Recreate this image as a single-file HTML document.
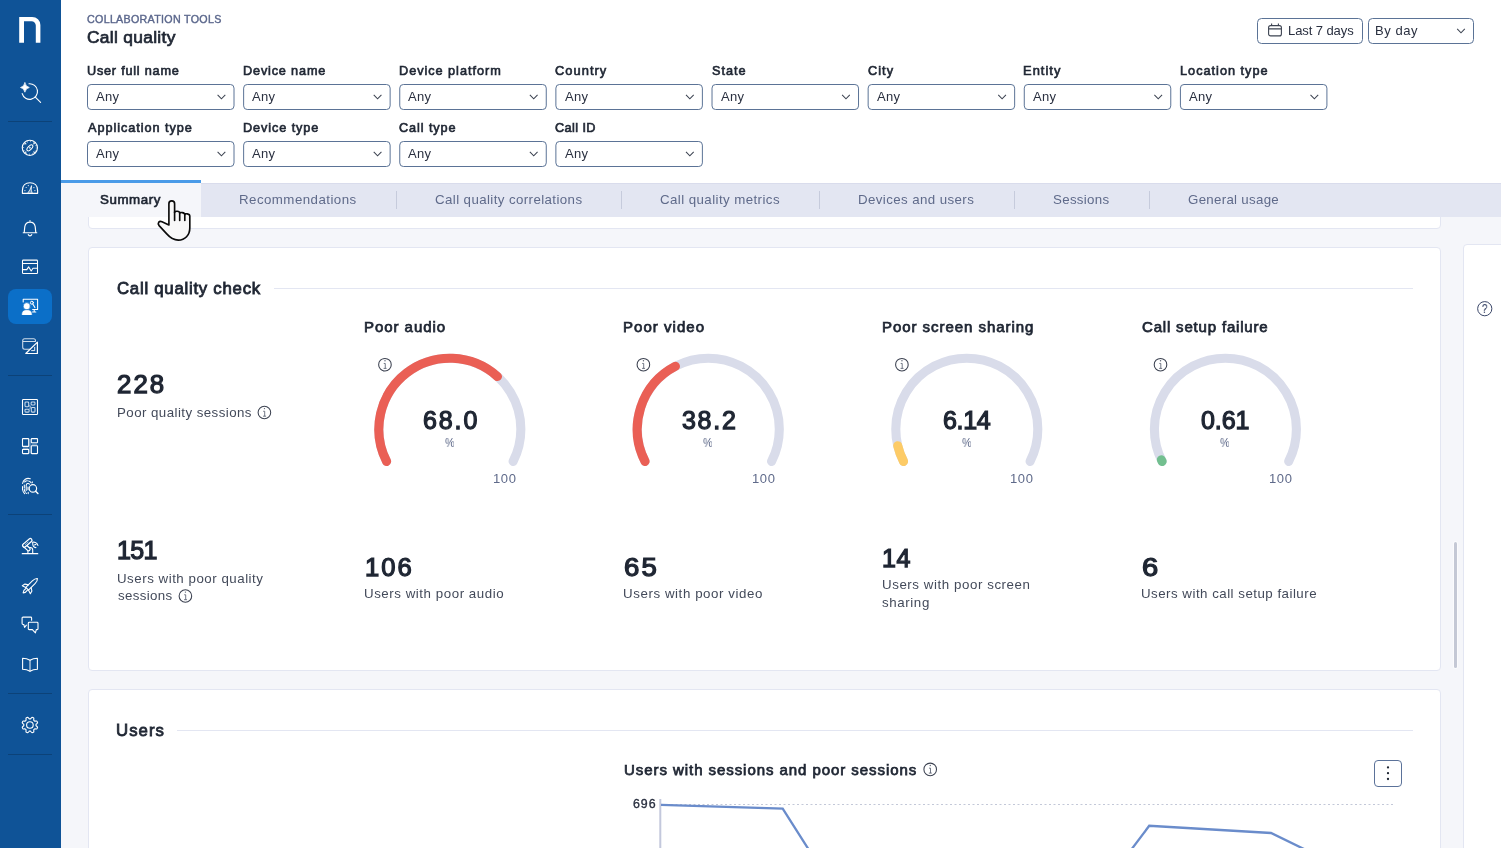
<!DOCTYPE html>
<html lang="en">
<head>
<meta charset="utf-8">
<title>Call quality</title>
<style>
*{box-sizing:border-box;margin:0;padding:0}
html,body{width:1501px;height:848px;overflow:hidden;background:#f5f6fa;font-family:"Liberation Sans",sans-serif;color:#1f2633}
.abs{position:absolute}
#side{position:absolute;left:0;top:0;width:61px;height:848px;background:#0f5397}
#side .sep{position:absolute;left:8px;width:44px;height:1px;background:#0c4278}
#side .act{position:absolute;left:8px;top:289px;width:44px;height:35px;border-radius:8px;background:#0b6fc8}
#side svg{position:absolute;overflow:visible}
#head{position:absolute;left:61px;top:0;width:1440px;height:183px;background:#fff}
.t{position:absolute;white-space:nowrap;line-height:1;will-change:transform}
.crumb{left:87px;top:13px;font-size:11.5px;color:#5a6587;letter-spacing:.35px}
.title{left:87px;top:28px;font-size:17.5px;font-weight:700;color:#1f2633}
.flab{font-size:13px;font-weight:700;color:#1f2633}
.sel{position:absolute;width:147px;height:26px;border:1px solid #5b7396;border-radius:4.5px;background:#fff}
.sel svg{position:absolute}
.sel svg.chev{right:7.2px;top:8.9px}
#tabs{position:absolute;left:61px;top:183px;width:1440px;height:34px;background:#e3e6f2;border-top:1px solid #d9dcec}
#tabs .on{position:absolute;left:0;top:-4px;width:140px;height:37px;background:#f5f6fa;border-top:3px solid #4a9be8}
.tab{position:absolute;top:192px;font-size:13px;color:#5f6a8a;white-space:nowrap;line-height:15px}
.tsep{position:absolute;top:191px;width:1px;height:18px;background:#c6cbdc}
.card{position:absolute;background:#fff;border:1px solid #e3e6f2;border-radius:4px}
.hl{position:absolute;height:1px;background:#e3e6f2}
.h2{font-size:17px;font-weight:700;color:#1f2633}
.big{font-size:26px;font-weight:700;color:#1f2633}
.lab{font-size:13px;color:#434a5a;line-height:17.5px;position:absolute;white-space:nowrap}
.gt{font-size:15px;font-weight:700;color:#1f2633}
.mut{color:#5f6a8a}
</style>
</head>
<body>
<div id="head"></div>

<div id="side">
<div class="act"></div>
<div class="sep" style="top:121px"></div>
<div class="sep" style="top:375px"></div>
<div class="sep" style="top:514px"></div>
<div class="sep" style="top:693px"></div>
<div class="sep" style="top:754px"></div>
<svg width="61" height="848" viewBox="0 0 61 848" fill="none" stroke="#fff" stroke-width="1.15" stroke-linecap="round" stroke-linejoin="round" style="left:0;top:0">
<path d="M19.2 42.8V16.9H32.2A8.2 8.2 0 0 1 40.4 25.1V42.8H35.8V25.6A4.3 4.3 0 0 0 31.5 21.3H24V42.8Z" fill="#fff" stroke="none"/>
<path d="M29 83.75A7.8 7.8 0 1 1 22.2 93.6M35.3 97.2L40.6 102.3" stroke-width="1.15"/>
<path d="M24.9 82.8Q25.7 86.7 29.3 87.5Q25.7 88.3 24.9 92.2Q24.1 88.3 20.5 87.5Q24.1 86.7 24.9 82.8Z" fill="#fff" stroke-width="0.7"/>
<circle cx="29.85" cy="147.85" r="7.6" stroke-width="1.1"/>
<circle cx="29.85" cy="147.85" r="6.5" stroke-width="1.5" stroke-dasharray="0.7 2.703" stroke-dashoffset=".35" stroke-linecap="butt" opacity=".7"/>
<path d="M24.9 142.9L25.9 143.9M34.8 142.9L33.8 143.9M24.9 152.8L25.9 151.8M34.8 152.8L33.8 151.8" stroke-width="1.2" opacity=".9"/>
<ellipse cx="29.85" cy="147.85" rx="3.7" ry="1.9" transform="rotate(-45 29.85 147.85)" stroke-width="1.05"/>
<circle cx="29.85" cy="147.85" r="1" fill="#fff" stroke="none" opacity=".75"/>
<path d="M22.4 193.3V190.4C22.4 185.6 25.6 182.7 30 182.7C34.4 182.7 37.6 185.6 37.6 190.4V193.3Z" stroke-width="1.15"/>
<path d="M27.8 193L29.9 189.8L31.6 185.6L31.2 190L32.2 193" stroke-width="0.8" fill="#fff" fill-opacity=".35"/>
<circle cx="24.9" cy="190.6" r=".62" fill="#fff" stroke="none" opacity=".9"/>
<circle cx="26.2" cy="187.5" r=".62" fill="#fff" stroke="none" opacity=".9"/>
<circle cx="28.3" cy="185.6" r=".62" fill="#fff" stroke="none" opacity=".9"/>
<circle cx="33.9" cy="187.6" r=".62" fill="#fff" stroke="none" opacity=".9"/>
<circle cx="34.9" cy="190.6" r=".62" fill="#fff" stroke="none" opacity=".9"/>
<path d="M24.2 232.6L24.8 226.6A5.3 5.5 0 0 1 35.2 226.6L35.8 232.6M23.2 232.7H36.8M28.3 234.6A1.8 1.8 0 0 0 31.7 234.6M30 220.6V221.2" stroke-width="1.15"/>
<rect x="22.5" y="260.1" width="15" height="13.4" rx=".8" stroke-width="1.05"/>
<path d="M22.5 263.4H37.5M22.5 269.6H26.8L28.6 266.9L31.2 271L33 268.2H37.5" stroke-width="1.05"/>
<path d="M23.2 302V299.2H37.6V309.4H32.6M34.2 309.6V311.9M32.4 312H35.8" stroke-width="1.05"/>
<circle cx="31.9" cy="302.7" r="1.5" stroke-width="1.0"/><path d="M32.8 304L34.9 307.5" stroke-width="1.1"/>
<circle cx="26.8" cy="306.2" r="3.6" fill="#fff" stroke="#0b6fc8" stroke-width="0.7"/>
<path d="M21.6 315.1C21.6 311 23.6 309.7 26.9 309.7C30.2 309.7 32.2 311 32.2 315.1Z" fill="#fff" stroke="#0b6fc8" stroke-width="0.6"/>
<path d="M30 349.2H24.7A2 2 0 0 1 22.7 347.2V340.7A2 2 0 0 1 24.7 338.7H33.5A2 2 0 0 1 35.5 340.7V341.3M22.7 341.5H35.3" stroke-width="1.05" opacity=".8"/>
<path d="M37.4 342.1V353.5H25.8Z" stroke-width="1.2"/>
<path d="M34.7 347.3V350.6H31.6" stroke-width="1.0" opacity=".9"/>
<rect x="22.5" y="399.5" width="15" height="15" rx=".8" stroke-width="1.1"/>
<g stroke-width="1.05" opacity=".78"><rect x="25" y="402" width="3.7" height="4.7" rx=".9"/><rect x="31.1" y="402" width="3.9" height="2.9" rx=".9"/><rect x="25" y="409.2" width="4.1" height="2.9" rx=".9"/><rect x="31.3" y="407.4" width="3.7" height="4.7" rx=".9"/><path d="M29.3 405.6L30.8 407.8M29.8 408.8L30.6 406" opacity=".6"/></g>
<g stroke-width="1.1"><rect x="22.5" y="438.6" width="6.2" height="7.8" rx=".5"/><rect x="31.3" y="438.6" width="6.2" height="4.2" rx=".5"/><rect x="22.5" y="449.4" width="6.2" height="4.2" rx=".5"/><rect x="31.3" y="445.7" width="6.2" height="7.9" rx=".5"/></g>
<path d="M30 439V453.4M23 447.9H28.3M31.8 444.3H37" stroke-width="1.5" opacity=".3" stroke-linecap="butt"/>
<g stroke-width="1.05"><path d="M22.6 483.5A5.6 5.6 0 0 1 30.3 478.8M22.5 486.5V489.5A8 8 0 0 0 24.6 493.6" /><path d="M24.6 482A4.2 4.2 0 0 1 31.3 483.2M24.3 485V489.2A6 6 0 0 0 26.5 493.4" stroke-dasharray="3 1.2"/><path d="M26.2 490.5V485.3A1.9 1.9 0 0 1 29.6 484.2M28 487V489.8M28.2 492.3V493.6M32.3 481.8V482.8" /></g>
<circle cx="32.9" cy="488.4" r="3.7" stroke-width="1.15"/><path d="M35.6 491.2L37.9 493.5" stroke-width="1.5"/>
<path d="M22.3 553.7H37.7" stroke-width="1.25"/>
<path d="M27.9 553.4V549.9A2.4 2.4 0 0 1 32.7 549.9V553.4" stroke-width="1.1"/>
<path d="M24.3 545.4L28.6 549.2" stroke-width="4.3"/><path d="M24.3 545.4L28.6 549.2" stroke-width="1.9" stroke="#0f5397"/>
<path d="M24.3 545.4L30.3 540.2" stroke-width="4.6"/><path d="M24.3 545.4L30.3 540.2" stroke-width="2.1" stroke="#0f5397"/>
<path d="M25.3 544.5L28 542.2" stroke-width="0.8" stroke-dasharray="1.4 1" opacity=".8"/>
<path d="M32.3 542.3C34.6 541.6 37.4 542.8 37.9 545.5M32.7 543.4C32.7 545.6 33.9 547.2 35.9 547.6M34.5 544.9L36 544.3" stroke-width="1.1"/>
<g transform="translate(30 586) rotate(-45)" stroke-width="1.1"><path d="M-4 -1.9H5.2C7.8 -1.9 9.7 -1 10.5 0C9.7 1 7.8 1.9 5.2 1.9H-4Z"/><path d="M-0.3 -1.9L-2.2 -4.9L-5.2 -5.7L-4 -2M-0.3 1.9L-2.2 4.9L-5.2 5.7L-4 2M-4.7 -1.1C-7 -1.6 -8.8 -.9 -9.7 0C-8.8 .9 -7 1.6 -4.7 1.1"/></g>
<g stroke-width="1.1"><path d="M31.6 620.2V618A.9.9 0 0 0 30.7 617.1H23A.9.9 0 0 0 22.1 618V623.6A.9.9 0 0 0 23 624.5H23.8L24.6 627.4L26.4 625.2"/><path d="M29.2 622.3H37.1A.9.9 0 0 1 38 623.2V628.7A.9.9 0 0 1 37.1 629.6H36.3L35.4 632.9L32.4 629.6H29.2A.9.9 0 0 1 28.3 628.7V623.2A.9.9 0 0 1 29.2 622.3Z"/></g>
<path d="M22.6 658.3C25.5 658.3 28 659 30 660.3C32 659 34.5 658.3 37.4 658.3V669.3C34.5 669.3 32 670 30 671.3C28 670 25.5 669.3 22.6 669.3Z" stroke-width="1.1"/>
<path d="M30 660.5V671" stroke-width="1.5" opacity=".65"/>
<path d="M36.00 725.00L36.00 725.16L35.99 725.32L35.98 725.48L35.97 725.64L36.14 725.82L36.40 726.03L36.68 726.26L36.95 726.50L37.21 726.76L37.44 727.02L37.57 727.27L37.51 727.47L37.44 727.67L37.37 727.87L37.29 728.06L37.21 728.25L37.12 728.44L37.03 728.63L36.93 728.82L36.66 728.90L36.31 728.93L35.95 728.93L35.58 728.90L35.22 728.87L34.89 728.83L34.64 728.84L34.54 728.96L34.43 729.08L34.32 729.20L34.21 729.31L34.10 729.42L33.98 729.53L33.86 729.64L33.74 729.74L33.73 729.99L33.77 730.32L33.80 730.68L33.83 731.05L33.83 731.41L33.80 731.76L33.72 732.03L33.53 732.13L33.34 732.22L33.15 732.31L32.96 732.39L32.77 732.47L32.57 732.54L32.37 732.61L32.17 732.67L31.92 732.54L31.66 732.31L31.40 732.05L31.16 731.78L30.93 731.50L30.72 731.24L30.54 731.07L30.38 731.08L30.22 731.09L30.06 731.10L29.90 731.10L29.74 731.10L29.58 731.09L29.42 731.08L29.26 731.07L29.08 731.24L28.87 731.50L28.64 731.78L28.40 732.05L28.14 732.31L27.88 732.54L27.63 732.67L27.43 732.61L27.23 732.54L27.03 732.47L26.84 732.39L26.65 732.31L26.46 732.22L26.27 732.13L26.08 732.03L25.99 731.76L25.97 731.41L25.97 731.05L26.00 730.68L26.03 730.32L26.07 729.99L26.06 729.74L25.94 729.64L25.82 729.53L25.70 729.42L25.59 729.31L25.48 729.20L25.37 729.08L25.26 728.96L25.16 728.84L24.91 728.83L24.58 728.87L24.22 728.90L23.85 728.93L23.49 728.93L23.14 728.90L22.87 728.82L22.77 728.63L22.68 728.44L22.59 728.25L22.51 728.06L22.43 727.87L22.36 727.67L22.29 727.47L22.23 727.27L22.36 727.02L22.59 726.76L22.85 726.50L23.12 726.26L23.40 726.03L23.66 725.82L23.83 725.64L23.82 725.48L23.81 725.32L23.80 725.16L23.80 725.00L23.80 724.84L23.81 724.68L23.82 724.52L23.83 724.36L23.66 724.18L23.40 723.97L23.12 723.74L22.85 723.50L22.59 723.24L22.36 722.98L22.23 722.73L22.29 722.53L22.36 722.33L22.43 722.13L22.51 721.94L22.59 721.75L22.68 721.56L22.77 721.37L22.87 721.18L23.14 721.10L23.49 721.07L23.85 721.07L24.22 721.10L24.58 721.13L24.91 721.17L25.16 721.16L25.26 721.04L25.37 720.92L25.48 720.80L25.59 720.69L25.70 720.58L25.82 720.47L25.94 720.36L26.06 720.26L26.07 720.01L26.03 719.68L26.00 719.32L25.97 718.95L25.97 718.59L25.99 718.24L26.08 717.97L26.27 717.87L26.46 717.78L26.65 717.69L26.84 717.61L27.03 717.53L27.23 717.46L27.43 717.39L27.63 717.33L27.88 717.46L28.14 717.69L28.40 717.95L28.64 718.22L28.87 718.50L29.08 718.76L29.26 718.93L29.42 718.92L29.58 718.91L29.74 718.90L29.90 718.90L30.06 718.90L30.22 718.91L30.38 718.92L30.54 718.93L30.72 718.76L30.93 718.50L31.16 718.22L31.40 717.95L31.66 717.69L31.92 717.46L32.17 717.33L32.37 717.39L32.57 717.46L32.77 717.53L32.96 717.61L33.15 717.69L33.34 717.78L33.53 717.87L33.72 717.97L33.80 718.24L33.83 718.59L33.83 718.95L33.80 719.32L33.77 719.68L33.73 720.01L33.74 720.26L33.86 720.36L33.98 720.47L34.10 720.58L34.21 720.69L34.32 720.80L34.43 720.92L34.54 721.04L34.64 721.16L34.89 721.17L35.22 721.13L35.58 721.10L35.95 721.07L36.31 721.07L36.66 721.10L36.93 721.18L37.03 721.37L37.12 721.56L37.21 721.75L37.29 721.94L37.37 722.13L37.44 722.33L37.51 722.53L37.57 722.73L37.44 722.98L37.21 723.24L36.95 723.50L36.68 723.74L36.40 723.97L36.14 724.18L35.97 724.36L35.98 724.52L35.99 724.68L36.00 724.84Z" stroke-width="1.1"/>
<circle cx="29.9" cy="725" r="3.3" stroke-width="1.1"/>
</svg>
</div>
<div class="t" style="left:87.27px;top:14px;font-size:10.7px;-webkit-text-stroke:0.40px #5b678c;color:#5b678c;letter-spacing:0.30px;">COLLABORATION TOOLS</div>
<div class="t" style="left:87.20px;top:29px;font-size:17.4px;-webkit-text-stroke:0.74px #1f2633;color:#1f2633;letter-spacing:0.30px;">Call quality</div>
<div class="sel" style="left:1257px;top:18px;width:106px"><svg style="left:9.2px;top:3.4px" width="16" height="16" viewBox="0 0 16 16" fill="none" stroke="#3d4452" stroke-width="1.1"><rect x="1.6" y="3.6" width="12.8" height="10.3" rx="2"/><path d="M1.6 6.9h12.8M4.6 1.4v2.2M11.4 1.4v2.2"/></svg></div>
<div class="t" style="left:1287.86px;top:24px;font-size:13px;color:#2a3040;letter-spacing:-0.08px;">Last 7 days</div>
<div class="sel" style="left:1368px;top:18px;width:106px"><svg class="chev" width="10" height="6" viewBox="0 0 10 6"><path d="M1.2 .9l3.8 3.9 3.8-3.9" fill="none" stroke="#3d4452" stroke-width="1.05"/></svg></div>
<div class="t" style="left:1375.46px;top:24px;font-size:13px;color:#2a3040;letter-spacing:0.56px;">By day</div>
<div class="t" style="left:86.77px;top:65px;font-size:12.7px;-webkit-text-stroke:0.64px #1f2633;color:#1f2633;letter-spacing:0.77px;">User full name</div>
<div class="t" style="left:242.83px;top:65px;font-size:12.7px;-webkit-text-stroke:0.64px #1f2633;color:#1f2633;letter-spacing:0.83px;">Device name</div>
<div class="t" style="left:398.96px;top:65px;font-size:12.7px;-webkit-text-stroke:0.64px #1f2633;color:#1f2633;letter-spacing:0.97px;">Device platform</div>
<div class="t" style="left:555.47px;top:65px;font-size:12.7px;-webkit-text-stroke:0.64px #1f2633;color:#1f2633;letter-spacing:1.02px;transform:scaleX(1.0149);transform-origin:0 0;">Country</div>
<div class="t" style="left:711.67px;top:65px;font-size:12.7px;-webkit-text-stroke:0.64px #1f2633;color:#1f2633;letter-spacing:0.96px;">State</div>
<div class="t" style="left:867.73px;top:65px;font-size:12.7px;-webkit-text-stroke:0.64px #1f2633;color:#1f2633;letter-spacing:1.02px;transform:scaleX(1.0043);transform-origin:0 0;">City</div>
<div class="t" style="left:1023.47px;top:65px;font-size:12.7px;-webkit-text-stroke:0.64px #1f2633;color:#1f2633;letter-spacing:1.02px;transform:scaleX(1.0151);transform-origin:0 0;">Entity</div>
<div class="t" style="left:1179.61px;top:65px;font-size:12.7px;-webkit-text-stroke:0.64px #1f2633;color:#1f2633;letter-spacing:1.01px;">Location type</div>
<div class="t" style="left:87.72px;top:122px;font-size:12.7px;-webkit-text-stroke:0.64px #1f2633;color:#1f2633;letter-spacing:0.95px;">Application type</div>
<div class="t" style="left:242.83px;top:122px;font-size:12.7px;-webkit-text-stroke:0.64px #1f2633;color:#1f2633;letter-spacing:0.91px;">Device type</div>
<div class="t" style="left:399.34px;top:122px;font-size:12.7px;-webkit-text-stroke:0.64px #1f2633;color:#1f2633;letter-spacing:0.90px;">Call type</div>
<div class="t" style="left:555.47px;top:122px;font-size:12.7px;-webkit-text-stroke:0.64px #1f2633;color:#1f2633;letter-spacing:0.41px;">Call ID</div>
<svg class="abs" style="left:0;top:0;z-index:0" width="1501" height="180"><g fill="#fff" stroke="#5b7396" stroke-width="1"><rect x="87.50" y="84.5" width="146.5" height="25" rx="3.6"/><rect x="243.63" y="84.5" width="146.5" height="25" rx="3.6"/><rect x="399.76" y="84.5" width="146.5" height="25" rx="3.6"/><rect x="555.89" y="84.5" width="146.5" height="25" rx="3.6"/><rect x="712.02" y="84.5" width="146.5" height="25" rx="3.6"/><rect x="868.15" y="84.5" width="146.5" height="25" rx="3.6"/><rect x="1024.28" y="84.5" width="146.5" height="25" rx="3.6"/><rect x="1180.41" y="84.5" width="146.5" height="25" rx="3.6"/><rect x="87.50" y="141.5" width="146.5" height="25" rx="3.6"/><rect x="243.63" y="141.5" width="146.5" height="25" rx="3.6"/><rect x="399.76" y="141.5" width="146.5" height="25" rx="3.6"/><rect x="555.89" y="141.5" width="146.5" height="25" rx="3.6"/></g><path d="M217.60 94.9l3.85 3.9 3.85-3.9M373.73 94.9l3.85 3.9 3.85-3.9M529.86 94.9l3.85 3.9 3.85-3.9M685.99 94.9l3.85 3.9 3.85-3.9M842.12 94.9l3.85 3.9 3.85-3.9M998.25 94.9l3.85 3.9 3.85-3.9M1154.38 94.9l3.85 3.9 3.85-3.9M1310.51 94.9l3.85 3.9 3.85-3.9M217.60 151.9l3.85 3.9 3.85-3.9M373.73 151.9l3.85 3.9 3.85-3.9M529.86 151.9l3.85 3.9 3.85-3.9M685.99 151.9l3.85 3.9 3.85-3.9" fill="none" stroke="#3d4452" stroke-width="1.05"/></svg>
<div class="t" style="left:96.20px;top:90px;font-size:13px;color:#2a3040;letter-spacing:0.29px;">Any</div><div class="t" style="left:252.33px;top:90px;font-size:13px;color:#2a3040;letter-spacing:0.29px;">Any</div><div class="t" style="left:408.46px;top:90px;font-size:13px;color:#2a3040;letter-spacing:0.29px;">Any</div><div class="t" style="left:564.59px;top:90px;font-size:13px;color:#2a3040;letter-spacing:0.29px;">Any</div><div class="t" style="left:720.72px;top:90px;font-size:13px;color:#2a3040;letter-spacing:0.29px;">Any</div><div class="t" style="left:876.85px;top:90px;font-size:13px;color:#2a3040;letter-spacing:0.29px;">Any</div><div class="t" style="left:1032.98px;top:90px;font-size:13px;color:#2a3040;letter-spacing:0.29px;">Any</div><div class="t" style="left:1189.11px;top:90px;font-size:13px;color:#2a3040;letter-spacing:0.29px;">Any</div><div class="t" style="left:96.20px;top:147px;font-size:13px;color:#2a3040;letter-spacing:0.29px;">Any</div><div class="t" style="left:252.33px;top:147px;font-size:13px;color:#2a3040;letter-spacing:0.29px;">Any</div><div class="t" style="left:408.46px;top:147px;font-size:13px;color:#2a3040;letter-spacing:0.29px;">Any</div><div class="t" style="left:564.59px;top:147px;font-size:13px;color:#2a3040;letter-spacing:0.29px;">Any</div>
<div class="card" style="left:88px;top:200px;width:1353px;height:29px"></div>
<div id="tabs"><div class="on"></div></div>
<div class="t" style="left:100.23px;top:193px;font-size:13.3px;-webkit-text-stroke:0.67px #1f2633;color:#1f2633;letter-spacing:0.58px;">Summary</div>
<div class="t" style="left:239.24px;top:193px;font-size:13.3px;color:#5f6a8a;letter-spacing:0.45px;">Recommendations</div>
<div class="t" style="left:434.83px;top:193px;font-size:13.3px;color:#5f6a8a;letter-spacing:0.40px;">Call quality correlations</div>
<div class="t" style="left:660.24px;top:193px;font-size:13.3px;color:#5f6a8a;letter-spacing:0.42px;">Call quality metrics</div>
<div class="t" style="left:858.04px;top:193px;font-size:13.3px;color:#5f6a8a;letter-spacing:0.40px;">Devices and users</div>
<div class="t" style="left:1052.60px;top:193px;font-size:13.3px;color:#5f6a8a;letter-spacing:0.31px;">Sessions</div>
<div class="t" style="left:1187.84px;top:193px;font-size:13.3px;color:#5f6a8a;letter-spacing:0.29px;">General usage</div>
<div class="tsep" style="left:396px"></div>
<div class="tsep" style="left:621px"></div>
<div class="tsep" style="left:819px"></div>
<div class="tsep" style="left:1013.5px"></div>
<div class="tsep" style="left:1149px"></div>
<div class="card" style="left:88px;top:247px;width:1353px;height:424px"></div>
<div class="card" style="left:88px;top:689px;width:1353px;height:200px"></div>
<div class="card" style="left:1463px;top:244px;width:60px;height:700px"></div>
<div class="abs" style="left:1454px;top:542px;width:3px;height:126px;border-radius:1.5px;background:#c4c8d5;box-shadow:0 0 0 1px rgba(255,255,255,.55)"></div>
<svg class="abs" style="left:1476px;top:300px" width="18" height="18" viewBox="1476 300 18 18"><circle cx="1484.75" cy="308.7" r="7.1" fill="none" stroke="#3a4668" stroke-width="1"/></svg>
<div class="t" style="left:1481.88px;top:303px;font-size:12.8px;-webkit-text-stroke:0.19px #3a4668;color:#3a4668;letter-spacing:-0.61px;transform:scaleX(0.7576);transform-origin:0 0;">?</div>
<div class="t" style="left:116.98px;top:281px;font-size:16.8px;-webkit-text-stroke:0.84px #1f2633;color:#1f2633;letter-spacing:0.74px;">Call quality check</div>
<div class="hl" style="left:274px;top:288px;width:1139px"></div>
<div class="t" style="left:117.36px;top:372px;font-size:25px;-webkit-text-stroke:1.25px #1f2633;color:#1f2633;letter-spacing:2.00px;transform:scaleX(1.0308);transform-origin:0 0;">228</div>
<div class="t" style="left:116.94px;top:406px;font-size:13.3px;color:#434a5a;letter-spacing:0.44px;">Poor quality sessions</div>
<svg class="abs" style="left:255px;top:403px" width="18" height="18" viewBox="0 0 18 18"><circle cx="9.40" cy="9.50" r="6.3" fill="none" stroke="#3b4150" stroke-width="1.05"/><path d="M8.20 8.25h1.5v4.9M8.05 13.20h3" fill="none" stroke="#596070" stroke-width=".85"/><circle cx="9.45" cy="5.60" r=".7" fill="#596070"/></svg>
<div class="t" style="left:117.15px;top:538px;font-size:25px;-webkit-text-stroke:1.25px #1f2633;color:#1f2633;letter-spacing:-0.64px;">151</div>
<div class="t" style="left:117.00px;top:572px;font-size:13.3px;color:#434a5a;letter-spacing:0.52px;">Users with poor quality</div>
<div class="t" style="left:117.60px;top:589px;font-size:13.3px;color:#434a5a;letter-spacing:0.36px;">sessions</div>
<svg class="abs" style="left:176px;top:587px" width="18" height="18" viewBox="0 0 18 18"><circle cx="9.40" cy="9.00" r="6.3" fill="none" stroke="#3b4150" stroke-width="1.05"/><path d="M8.20 7.75h1.5v4.9M8.05 12.70h3" fill="none" stroke="#596070" stroke-width=".85"/><circle cx="9.45" cy="5.10" r=".7" fill="#596070"/></svg>
<svg class="abs" style="left:0;top:0" width="1501" height="848">
<path d="M386.59 461.43A71.0 71.0 0 1 1 513.11 461.43" fill="none" stroke="#d9dcea" stroke-width="9.1" stroke-linecap="round"/>
<path d="M386.59 461.43A71.0 71.0 0 0 1 497.47 376.54" fill="none" stroke="#ea5f55" stroke-width="9.1" stroke-linecap="round"/>
<path d="M645.04 461.43A71.0 71.0 0 1 1 771.56 461.43" fill="none" stroke="#d9dcea" stroke-width="9.1" stroke-linecap="round"/>
<path d="M645.04 461.43A71.0 71.0 0 0 1 675.39 366.29" fill="none" stroke="#ea5f55" stroke-width="9.1" stroke-linecap="round"/>
<path d="M903.54 461.43A71.0 71.0 0 1 1 1030.06 461.43" fill="none" stroke="#d9dcea" stroke-width="9.1" stroke-linecap="round"/>
<path d="M903.54 461.43A71.0 71.0 0 0 1 897.74 445.69" fill="none" stroke="#fdcb66" stroke-width="9.1" stroke-linecap="round"/>
<path d="M1162.14 461.43A71.0 71.0 0 1 1 1288.66 461.43" fill="none" stroke="#d9dcea" stroke-width="9.1" stroke-linecap="round"/>
<path d="M1162.14 461.43A71.0 71.0 0 0 1 1161.36 459.85" fill="none" stroke="#72bf8f" stroke-width="9.1" stroke-linecap="round"/>
</svg>
<div class="t" style="left:364.48px;top:319px;font-size:15px;-webkit-text-stroke:0.75px #1f2633;color:#1f2633;letter-spacing:0.95px;">Poor audio</div>
<svg class="abs" style="left:375px;top:355px" width="18" height="18" viewBox="0 0 18 18"><circle cx="9.95" cy="9.70" r="6.3" fill="none" stroke="#3b4150" stroke-width="1.05"/><path d="M8.75 8.45h1.5v4.9M8.60 13.40h3" fill="none" stroke="#596070" stroke-width=".85"/><circle cx="10.00" cy="5.80" r=".7" fill="#596070"/></svg>
<div class="t" style="left:422.73px;top:408px;font-size:25px;-webkit-text-stroke:1.25px #1f2633;color:#1f2633;letter-spacing:1.88px;">68.0</div>
<div class="t" style="left:444.62px;top:437px;font-size:12.6px;color:#5f6a8a;letter-spacing:-0.38px;transform:scaleX(0.8614);transform-origin:0 0;">%</div>
<div class="t" style="left:493.32px;top:472px;font-size:13px;color:#5f6a8a;letter-spacing:0.64px;">100</div>
<div class="t" style="left:364.52px;top:555px;font-size:25px;-webkit-text-stroke:1.25px #1f2633;color:#1f2633;letter-spacing:2.00px;transform:scaleX(1.0227);transform-origin:0 0;">106</div>
<div class="t" style="left:364.30px;top:587px;font-size:13.3px;color:#434a5a;letter-spacing:0.55px;">Users with poor audio</div>
<div class="t" style="left:623.38px;top:319px;font-size:15px;-webkit-text-stroke:0.75px #1f2633;color:#1f2633;letter-spacing:1.04px;">Poor video</div>
<svg class="abs" style="left:634px;top:355px" width="18" height="18" viewBox="0 0 18 18"><circle cx="9.40" cy="9.70" r="6.3" fill="none" stroke="#3b4150" stroke-width="1.05"/><path d="M8.20 8.45h1.5v4.9M8.05 13.40h3" fill="none" stroke="#596070" stroke-width=".85"/><circle cx="9.45" cy="5.80" r=".7" fill="#596070"/></svg>
<div class="t" style="left:681.73px;top:408px;font-size:25px;-webkit-text-stroke:1.25px #1f2633;color:#1f2633;letter-spacing:1.72px;">38.2</div>
<div class="t" style="left:703.07px;top:437px;font-size:12.6px;color:#5f6a8a;letter-spacing:-0.38px;transform:scaleX(0.8614);transform-origin:0 0;">%</div>
<div class="t" style="left:751.77px;top:472px;font-size:13px;color:#5f6a8a;letter-spacing:0.64px;">100</div>
<div class="t" style="left:624.01px;top:555px;font-size:25px;-webkit-text-stroke:1.25px #1f2633;color:#1f2633;letter-spacing:2.00px;transform:scaleX(1.1026);transform-origin:0 0;">65</div>
<div class="t" style="left:623.20px;top:587px;font-size:13.3px;color:#434a5a;letter-spacing:0.58px;">Users with poor video</div>
<div class="t" style="left:881.97px;top:319px;font-size:15px;-webkit-text-stroke:0.75px #1f2633;color:#1f2633;letter-spacing:0.95px;">Poor screen sharing</div>
<svg class="abs" style="left:892px;top:355px" width="18" height="18" viewBox="0 0 18 18"><circle cx="9.90" cy="9.70" r="6.3" fill="none" stroke="#3b4150" stroke-width="1.05"/><path d="M8.70 8.45h1.5v4.9M8.55 13.40h3" fill="none" stroke="#596070" stroke-width=".85"/><circle cx="9.95" cy="5.80" r=".7" fill="#596070"/></svg>
<div class="t" style="left:942.98px;top:408px;font-size:25px;-webkit-text-stroke:1.25px #1f2633;color:#1f2633;letter-spacing:-0.36px;">6.14</div>
<div class="t" style="left:961.57px;top:437px;font-size:12.6px;color:#5f6a8a;letter-spacing:-0.38px;transform:scaleX(0.8614);transform-origin:0 0;">%</div>
<div class="t" style="left:1010.27px;top:472px;font-size:13px;color:#5f6a8a;letter-spacing:0.64px;">100</div>
<div class="t" style="left:882.05px;top:546px;font-size:25px;-webkit-text-stroke:1.25px #1f2633;color:#1f2633;letter-spacing:0.62px;">14</div>
<div class="t" style="left:881.80px;top:578px;font-size:13.3px;color:#434a5a;letter-spacing:0.57px;">Users with poor screen</div>
<div class="t" style="left:882.40px;top:596px;font-size:13.3px;color:#434a5a;letter-spacing:0.61px;">sharing</div>
<div class="t" style="left:1141.62px;top:319px;font-size:15px;-webkit-text-stroke:0.75px #1f2633;color:#1f2633;letter-spacing:0.82px;">Call setup failure</div>
<svg class="abs" style="left:1151px;top:355px" width="18" height="18" viewBox="0 0 18 18"><circle cx="9.50" cy="9.70" r="6.3" fill="none" stroke="#3b4150" stroke-width="1.05"/><path d="M8.30 8.45h1.5v4.9M8.15 13.40h3" fill="none" stroke="#596070" stroke-width=".85"/><circle cx="9.55" cy="5.80" r=".7" fill="#596070"/></svg>
<div class="t" style="left:1201.48px;top:408px;font-size:25px;-webkit-text-stroke:1.25px #1f2633;color:#1f2633;letter-spacing:-0.08px;">0.61</div>
<div class="t" style="left:1220.17px;top:437px;font-size:12.6px;color:#5f6a8a;letter-spacing:-0.38px;transform:scaleX(0.8614);transform-origin:0 0;">%</div>
<div class="t" style="left:1268.88px;top:472px;font-size:13px;color:#5f6a8a;letter-spacing:0.64px;">100</div>
<div class="t" style="left:1141.77px;top:555px;font-size:25px;-webkit-text-stroke:1.25px #1f2633;color:#1f2633;letter-spacing:2.00px;transform:scaleX(1.1650);transform-origin:0 0;">6</div>
<div class="t" style="left:1141.00px;top:587px;font-size:13.3px;color:#434a5a;letter-spacing:0.49px;">Users with call setup failure</div>
<div class="t" style="left:116.16px;top:723px;font-size:16.8px;-webkit-text-stroke:0.84px #1f2633;color:#1f2633;letter-spacing:1.04px;">Users</div>
<div class="hl" style="left:177px;top:730px;width:1236px"></div>
<div class="t" style="left:623.55px;top:762px;font-size:15px;-webkit-text-stroke:0.75px #1f2633;color:#1f2633;letter-spacing:0.94px;">Users with sessions and poor sessions</div>
<svg class="abs" style="left:921px;top:760px" width="18" height="18" viewBox="0 0 18 18"><circle cx="9.20" cy="9.40" r="6.3" fill="none" stroke="#3b4150" stroke-width="1.05"/><path d="M8.00 8.15h1.5v4.9M7.85 13.10h3" fill="none" stroke="#596070" stroke-width=".85"/><circle cx="9.25" cy="5.50" r=".7" fill="#596070"/></svg>
<div class="abs" style="left:1374px;top:760px;width:28px;height:27px;border:1px solid #5b7299;border-radius:4px;background:#fff"></div>
<svg class="abs" style="left:1374px;top:760px" width="28" height="27"><circle cx="14" cy="7.4" r="1.15" fill="#1f2633"/><circle cx="14" cy="13.2" r="1.15" fill="#1f2633"/><circle cx="14" cy="19" r="1.15" fill="#1f2633"/></svg>
<div class="t" style="left:633.15px;top:798px;font-size:12.3px;-webkit-text-stroke:0.34px #2a3040;color:#2a3040;letter-spacing:0.98px;transform:scaleX(1.0056);transform-origin:0 0;">696</div>
<svg class="abs" style="left:0;top:0" width="1501" height="848">
<line x1="662" y1="804.5" x2="1393.5" y2="804.5" stroke="#c3c8d8" stroke-width="1" stroke-dasharray="2 2.5"/>
<line x1="660.3" y1="799" x2="660.3" y2="848" stroke="#c3c8dc" stroke-width="2"/>
<polyline points="661,804.8 782.7,808.7 809,850" fill="none" stroke="#6a8ccb" stroke-width="2.3" stroke-linejoin="miter"/>
<polyline points="1131,850 1149.2,825.8 1271,833 1306,850" fill="none" stroke="#6a8ccb" stroke-width="2.3" stroke-linejoin="miter"/>
</svg>
<svg class="abs" style="left:150px;top:190px" width="50" height="60" viewBox="150 190 50 60">
<path d="M168.9 224.9V203.7A2.85 2.85 0 0 1 174.6 203.7V212.6C174.6 210.7 179.7 210.7 179.7 213.3C179.7 212 184.8 212.2 184.8 214.7C184.8 213.2 189.8 213.4 189.8 216.2V228C189.8 235.2 185 240.1 178.3 240.1C173 240.1 170 237.6 166.5 233.6L159.1 225.6C157.2 223.3 159 220.5 162 221.8Z" fill="#f8f8f8" stroke="#0a0a0a" stroke-width="1.65" stroke-linejoin="round"/>
<path d="M174.6 212V220.4M179.7 213.3V220.4M184.8 214.7V220.4" fill="none" stroke="#0a0a0a" stroke-width="1.65" stroke-linecap="round"/>
</svg>

</body>
</html>
